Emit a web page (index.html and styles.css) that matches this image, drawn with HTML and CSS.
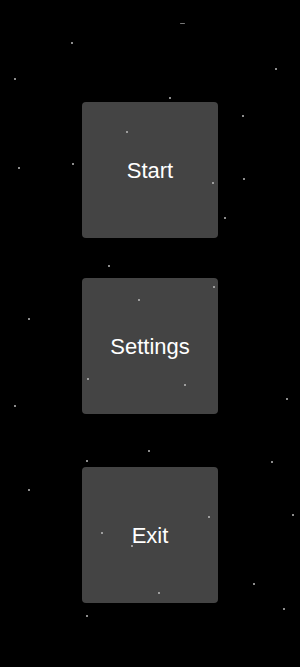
FILE: index.html
```html
<!DOCTYPE html>
<html lang="en">
<head>
    <meta charset="UTF-8">
    <meta name="viewport" content="width=device-width, initial-scale=1.0">
    <title>Menu</title>
    <link rel="stylesheet" href="styles.css">
</head>
<body>
    <!-- Main Menu -->
    <div class="menu">
        <button class="menu-btn">Start</button>
        <button class="menu-btn">Settings</button>
        <button class="menu-btn exit">Exit</button>
    </div>

    <!-- Star field drawn over everything -->
    <div class="stars">
        <span class="star dash" style="left:180px;top:23px"></span>
        <span class="star" style="left:71px;top:42px"></span>
        <span class="star" style="left:275px;top:68px"></span>
        <span class="star" style="left:14px;top:78px"></span>
        <span class="star" style="left:169px;top:97px"></span>
        <span class="star" style="left:242px;top:115px"></span>
        <span class="star" style="left:126px;top:131px"></span>
        <span class="star" style="left:72px;top:163px"></span>
        <span class="star" style="left:18px;top:167px"></span>
        <span class="star" style="left:243px;top:178px"></span>
        <span class="star" style="left:212px;top:182px"></span>
        <span class="star" style="left:224px;top:217px"></span>
        <span class="star" style="left:108px;top:265px"></span>
        <span class="star" style="left:213px;top:286px"></span>
        <span class="star" style="left:138px;top:299px"></span>
        <span class="star" style="left:28px;top:318px"></span>
        <span class="star" style="left:87px;top:378px"></span>
        <span class="star" style="left:184px;top:384px"></span>
        <span class="star" style="left:286px;top:398px"></span>
        <span class="star" style="left:14px;top:405px"></span>
        <span class="star" style="left:148px;top:450px"></span>
        <span class="star" style="left:86px;top:460px"></span>
        <span class="star" style="left:271px;top:461px"></span>
        <span class="star" style="left:28px;top:489px"></span>
        <span class="star" style="left:292px;top:514px"></span>
        <span class="star" style="left:208px;top:516px"></span>
        <span class="star" style="left:101px;top:532px"></span>
        <span class="star" style="left:131px;top:545px"></span>
        <span class="star" style="left:253px;top:583px"></span>
        <span class="star" style="left:158px;top:592px"></span>
        <span class="star" style="left:283px;top:608px"></span>
        <span class="star" style="left:86px;top:615px"></span>
    </div>
</body>
</html>
```

FILE: styles.css
```css
/* General Styling */
body, html {
    margin: 0;
    padding: 0;
    height: 100%;
    background: #000;
    font-family: "Liberation Sans", Arial, sans-serif;
    overflow: hidden;
}

/* Menu */
.menu {
    display: flex;
    flex-direction: column;
    align-items: center;
    gap: 40px;
    padding-top: 102px;
}

.menu-btn {
    width: 136px;
    height: 136px;
    display: flex;
    justify-content: center;
    align-items: center;
    background: #444;
    color: #fff;
    border: none;
    border-radius: 4px;
    font-family: inherit;
    font-size: 22px;
    padding: 2px 0 0;
    cursor: pointer;
}

.menu-btn.exit {
    margin-top: 13px;
}

/* Stars */
.stars {
    position: fixed;
    top: 0;
    left: 0;
    width: 100%;
    height: 100%;
    pointer-events: none;
}

.star {
    position: absolute;
    width: 2px;
    height: 2px;
    background: #bbb;
    border-radius: 1px;
}

.star.dash {
    width: 5px;
    height: 1px;
    background: #777;
}
```
